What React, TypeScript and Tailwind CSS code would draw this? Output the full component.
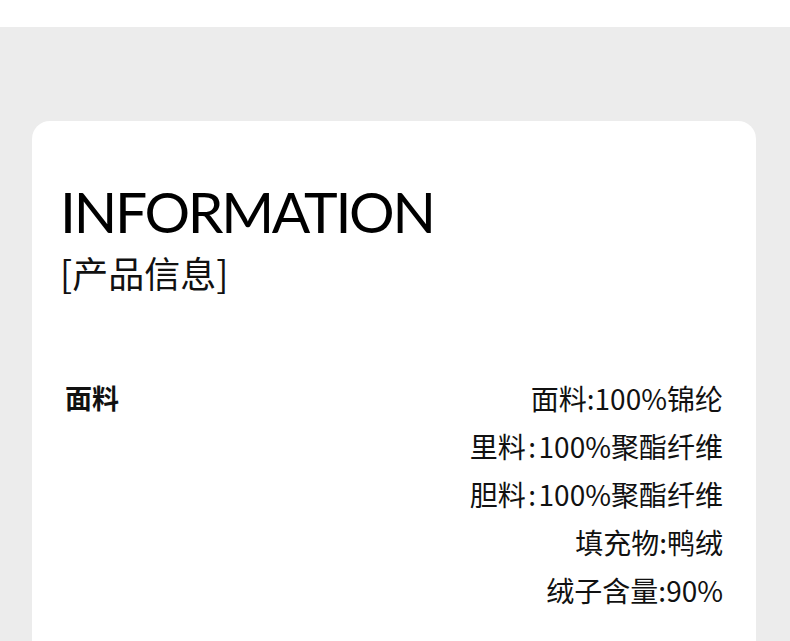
import React from "react";

const rows: [string, string, boolean][] = [
  ["面料", "100%锦纶", false],
  ["里料", "100%聚酯纤维", true],
  ["胆料", "100%聚酯纤维", true],
  ["填充物", "鸭绒", false],
  ["绒子含量", "90%", false],
];

export default function App() {
  return (
    <div className="w-[790px] h-[641px] overflow-hidden bg-[#ececec]" style={{ fontFamily: '"Noto Sans CJK SC", "Noto Sans", sans-serif' }}>
      <div className="h-[27px] bg-white" />
      <div className="pt-[94px] pl-[32px] pr-[34px]">
        <div className="bg-white rounded-[18px] h-[600px] pl-[28px] pr-[33px] pt-[62px]">
          <div
            className="text-[57px] leading-[57px] font-normal text-black tracking-[-2.3px]"
            style={{ fontFamily: 'Lato, "Noto Sans", sans-serif' }}
          >
            INFORMATION
          </div>
          <div className="mt-[10px] text-[36px] leading-[44px] text-[#111]">[产品信息]</div>
          <div className="mt-[80px] flex justify-between">
            <div className="pl-[5px] text-[27px] leading-[48px] font-bold text-[#111]">面料</div>
            <div className="flex flex-col items-end text-[28px] leading-[48px] text-[#111]">
              {rows.map(([a, b, wide]) => (
                <div key={a}>
                  {a}
                  <span className={wide ? "mx-[2.5px]" : ""}>:</span>
                  {b}
                </div>
              ))}
            </div>
          </div>
        </div>
      </div>
    </div>
  );
}
